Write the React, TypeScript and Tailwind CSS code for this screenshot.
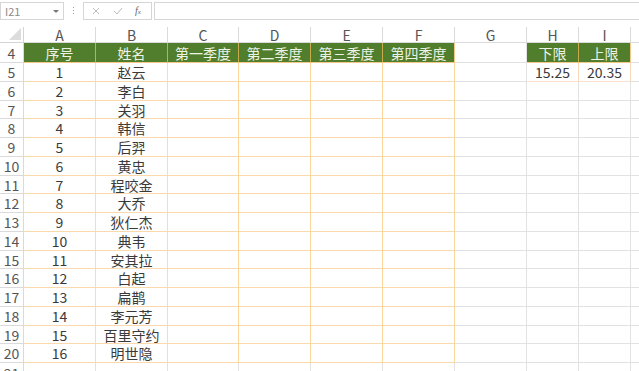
import type { ReactNode } from "react";

const names = [
  "赵云",
  "李白",
  "关羽",
  "韩信",
  "后羿",
  "黄忠",
  "程咬金",
  "大乔",
  "狄仁杰",
  "典韦",
  "安其拉",
  "白起",
  "扁鹊",
  "李元芳",
  "百里守约",
  "明世隐",
];

const colLetters = ["A", "B", "C", "D", "E", "F", "G", "H", "I"];
const quarters = ["第一季度", "第二季度", "第三季度", "第四季度"];

// row heights alternate to land on the 18.75px pitch of the sheet
const rowHeights = ["h-[19px]", "h-[19px]", "h-[18px]", "h-[19px]"];

function Cell({ className = "", children }: { className?: string; children?: ReactNode }) {
  return (
    <div className={`flex items-center justify-center overflow-hidden whitespace-nowrap border-r border-b leading-none ${className}`}>
      {children}
    </div>
  );
}

function FormulaBar() {
  return (
    <div className="flex h-[27px] items-start pt-[2px] text-[#8a8a8a]">
      <div className="relative flex h-[18px] w-[64px] items-center border border-[#d6d6d6] pl-[4px] text-[11px] leading-none">
        I21
        <span className="absolute right-[4px] top-[7px] h-0 w-0 border-x-[3px] border-t-[3px] border-x-transparent border-t-[#777]" />
      </div>
      <div className="flex w-[19px] flex-col items-center gap-[2px] pt-[5px]">
        <span className="h-[1px] w-[1px] bg-[#999]" />
        <span className="h-[1px] w-[1px] bg-[#999]" />
        <span className="h-[1px] w-[1px] bg-[#999]" />
      </div>
      <div className="flex h-[18px] w-[69px] items-center border border-[#d6d6d6] text-[#b9b9b9]">
        <svg className="ml-[8px]" width="8" height="8" viewBox="0 0 8 8">
          <path d="M1 1L7 7M7 1L1 7" stroke="#bdbdbd" strokeWidth="1" />
        </svg>
        <svg className="ml-[13px]" width="10" height="8" viewBox="0 0 10 8">
          <path d="M1 4L4 7L9 1" stroke="#bdbdbd" strokeWidth="1" fill="none" />
        </svg>
        <span className="ml-[12px] font-['Liberation_Serif',serif] text-[10px] italic leading-none text-[#666]">
          f<span className="text-[7px]">x</span>
        </span>
      </div>
      <div className="ml-[2px] h-[18px] flex-1 border border-r-0 border-[#d6d6d6]" />
    </div>
  );
}

export default function App() {
  return (
    <div className="h-[371px] w-[639px] overflow-hidden bg-white font-['Noto_Sans_CJK_SC','Noto_Sans',sans-serif] text-[#3a3a3a]">
      <FormulaBar />
      <div className="grid grid-cols-[24px_72px_72px_71px_72px_72px_72px_72px_52px_52px_8px]">
        {/* column headers */}
        <div className="flex h-[16px] items-end justify-end border-r border-b border-[#d4d4d4] pr-[2px] pb-[2px]">
          <svg width="12" height="12" viewBox="0 0 12 12">
            <path d="M12 0L12 12L0 12Z" fill="#dcdcdc" />
          </svg>
        </div>
        {colLetters.map((c) => (
          <div key={c} className="flex h-[16px] items-center justify-center border-r border-b border-[#dadada] text-[14px] leading-none text-[#555]">
            {c}
          </div>
        ))}
        <div className="h-[16px] border-b border-[#dadada]" />

        {/* row 4 */}
        <Cell className="h-[20px] border-[#dadada] text-[14px] text-[#555]">4</Cell>
        <Cell className="h-[20px] border-r-[#c7ab4c] border-b-[#f3c98a] bg-[#507e2c] text-[14px] text-[#eef3e8]">序号</Cell>
        <Cell className="h-[20px] border-r-[#c7ab4c] border-b-[#f3c98a] bg-[#507e2c] text-[14px] text-[#eef3e8]">姓名</Cell>
        {quarters.map((q, i) => (
          <Cell
            key={q}
            className={`h-[20px] border-b-[#f3c98a] bg-[#507e2c] text-[14px] text-[#eef3e8] ${i === 3 ? "border-r-[#f3c98a]" : "border-r-[#c7ab4c]"}`}
          >
            {q}
          </Cell>
        ))}
        <Cell className="h-[20px] border-[#e2e2e2]" />
        <Cell className="h-[20px] border-r-[#c7ab4c] border-b-[#f3c98a] bg-[#507e2c] text-[14px] text-[#eef3e8]">下限</Cell>
        <Cell className="h-[20px] border-r-[#f3c98a] border-b-[#f3c98a] bg-[#507e2c] text-[14px] text-[#eef3e8]">上限</Cell>
        <div className="h-[20px] border-b border-[#e2e2e2]" />

        {/* data rows */}
        {names.map((name, i) => {
          const h = rowHeights[i % 4];
          return (
            <div key={name} className="contents">
              <Cell className={`${h} border-[#dadada] text-[14px] text-[#555]`}>{i + 5}</Cell>
              <Cell className={`${h} border-r-[#f9d8c8] border-b-[#fad9ad] text-[14px]`}>{i + 1}</Cell>
              <Cell className={`${h} border-r-[#f9d8c8] border-b-[#fad9ad] text-[14px]`}>{name}</Cell>
              <Cell className={`${h} border-r-[#fbd59a] border-b-[#fad9ad]`} />
              <Cell className={`${h} border-r-[#fbd59a] border-b-[#fad9ad]`} />
              <Cell className={`${h} border-r-[#fbd59a] border-b-[#fad9ad]`} />
              <Cell className={`${h} border-r-[#fbd59a] border-b-[#fad9ad]`} />
              <Cell className={`${h} border-[#e2e2e2]`} />
              {i === 0 ? (
                <>
                  <Cell className={`${h} border-r-[#f6d9b8] border-b-[#fbe0cf] text-[14px]`}>15.25</Cell>
                  <Cell className={`${h} border-r-[#f6d9b8] border-b-[#fbe0cf] text-[14px]`}>20.35</Cell>
                </>
              ) : (
                <>
                  <Cell className={`${h} border-[#e2e2e2]`} />
                  <Cell className={`${h} border-[#e2e2e2]`} />
                </>
              )}
              <div className={`${h} border-b border-[#e2e2e2]`} />
            </div>
          );
        })}

        {/* row 21, cut off */}
        <Cell className="h-[19px] items-start pt-[3px] border-[#dadada] text-[14px] text-[#555]">21</Cell>
        {colLetters.map((c) => (
          <Cell key={c} className="h-[19px] border-[#e2e2e2]" />
        ))}
        <div className="h-[19px]" />
      </div>
    </div>
  );
}
